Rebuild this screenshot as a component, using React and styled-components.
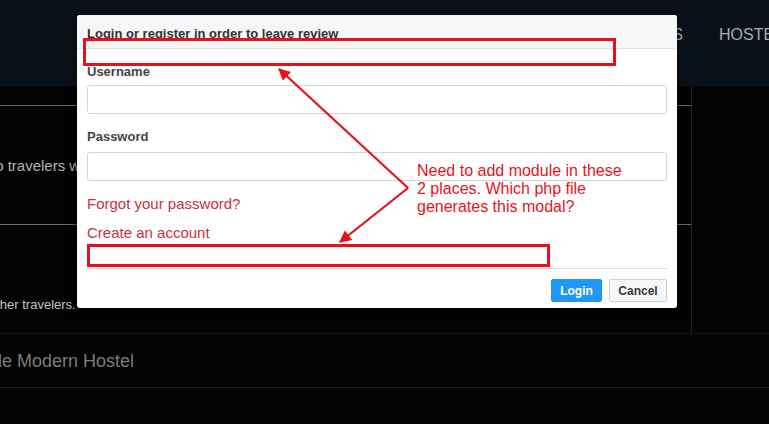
import React from 'react';
import styled, { createGlobalStyle } from 'styled-components';

const Global = createGlobalStyle`
    html, body {
        margin: 0;
        padding: 0;
        background: #020202;
    }
    * { box-sizing: border-box; }
`

const Page = styled.div`
    position: relative;
    width: 769px;
    height: 424px;
    overflow: hidden;
    background: #020202;
    font-family: "Liberation Sans", Arial, sans-serif;
`

const Nav = styled.div`
    height: 86px;
    background: #0b1119;
    display: flex;
    align-items: flex-start;
    padding-top: 26px;
    gap: 36px;
    white-space: nowrap;
`

const NavItem = styled.div`
    flex: none;
    width: ${({$width}) => $width ? `${$width}px` : 'auto'};
    text-align: ${({$width}) => $width ? 'right' : 'left'};
    font-size: 16px;
    line-height: 18px;
    color: #a9adb2;
`

const Upper = styled.div`
    display: flex;
    height: 248px;
    border-bottom: 1px solid #161616;
`

const MainCol = styled.div`
    width: 692px;
    border-right: 1px solid #29231a;
    padding-top: 19px;
    display: flex;
    flex-direction: column;
`

const Block = styled.div`
    height: ${({$h}) => $h}px;
    border-top: 1px solid #6c6c6c;
    display: flex;
    align-items: ${({$align='center'}) => $align};
    padding-bottom: ${({$pb=0}) => $pb}px;
    overflow: hidden;
    white-space: nowrap;
`

const BgText = styled.div`
    margin-left: ${({$shift=0}) => $shift}px;
    font-size: ${({$size}) => $size}px;
    color: ${({$color}) => $color};
    line-height: 1;
`

const TitleRow = styled.div`
    height: 54px;
    display: flex;
    align-items: center;
    border-bottom: 1px solid #282116;
    white-space: nowrap;
    overflow: hidden;
`

const Modal = styled.div`
    position: absolute;
    left: 77px;
    top: 15px;
    width: 600px;
    height: 293px;
    background: #fff;
    border-radius: 3px;
    box-shadow: 0 2px 10px rgba(0,0,0,0.5);
    overflow: hidden;
    display: flex;
    flex-direction: column;
`

const ModalHeader = styled.div`
    height: 34px;
    padding: 11px 10px 0;
    background: #f6f7f8;
    border-bottom: 1px solid #e3e4e6;
    font-size: 13px;
    line-height: 16px;
    font-weight: bold;
    color: #333;
`

const ModalBody = styled.div`
    padding: 0 10px;
    display: flex;
    flex-direction: column;
`

const Group = styled.div`
    margin-top: ${({$mt}) => $mt}px;
    display: flex;
    flex-direction: column;
`

const Label = styled.label`
    font-size: 13px;
    line-height: 16px;
    font-weight: bold;
    color: #444;
    margin-bottom: ${({$mb=5}) => $mb}px;
`

const Input = styled.div`
    height: 29px;
    border: 1px solid #d3d4d6;
    border-radius: 3px;
    background: #fff;
`

const Links = styled.div`
    margin-top: 14px;
    display: flex;
    flex-direction: column;
    gap: 11px;
`

const LinkText = styled.a`
    font-size: 15px;
    line-height: 18px;
    color: #c9303f;
    text-decoration: none;
`

const Footer = styled.div`
    margin-top: 26px;
    border-top: 1px solid #dcdde0;
    padding-top: 10px;
    display: flex;
    justify-content: flex-end;
    gap: 7px;
`

const Button = styled.button`
    height: 23px;
    padding: 0;
    border-radius: 2px;
    font-family: "Liberation Sans", Arial, sans-serif;
    font-size: 12px;
    font-weight: bold;
    border: 1px solid ${({$primary}) => $primary ? '#2196f3' : '#cfd0d3'};
    background: ${({$primary}) => $primary ? '#2196f3' : '#f5f6f7'};
    color: ${({$primary}) => $primary ? '#fff' : '#3a3a3a'};
    width: ${({$w}) => $w}px;
`

const Overlay = styled.svg`
    position: absolute;
    left: 0;
    top: 0;
    pointer-events: none;
`

const Note = styled.div`
    position: absolute;
    left: 417px;
    top: 162px;
    font-size: 16px;
    line-height: 18px;
    color: #e5141c;
`

const RED = '#e8101a';

function Annotation(){
    return <Overlay width="769" height="424" viewBox="0 0 769 424">
        <defs>
            <marker id="head" viewBox="0 0 10 10" refX="9" refY="5"
                markerWidth="6" markerHeight="5.5" orient="auto"
                markerUnits="strokeWidth">
                <path d="M0 0 L10 5 L0 10 Z" fill={RED} />
            </marker>
        </defs>
        <rect x="84.5" y="39.5" width="530" height="25" fill="none" stroke={RED} strokeWidth="3" />
        <rect x="88.5" y="245.5" width="460" height="20" fill="none" stroke={RED} strokeWidth="3" />
        <line x1="408" y1="188" x2="279" y2="69" stroke={RED} strokeWidth="2.2" markerEnd="url(#head)" />
        <line x1="408" y1="188" x2="340" y2="242" stroke={RED} strokeWidth="2.2" markerEnd="url(#head)" />
    </Overlay>
}

export default function App(){
    return <>
        <Global />
        <Page>
            <Nav>
                <NavItem $width={683}>DESTINATIONS</NavItem>
                <NavItem>HOSTELS</NavItem>
            </Nav>
            <Upper>
                <MainCol>
                    <Block $h={120}>
                        <BgText $shift={-9} $size={15} $color="#b3b3b3">to travelers worldwide</BgText>
                    </Block>
                    <Block $h={109} $align="flex-end" $pb={22}>
                        <BgText $shift={-11} $size={13} $color="#c4c4c4">other travelers.</BgText>
                    </Block>
                </MainCol>
            </Upper>
            <TitleRow>
                <BgText $shift={-2} $size={18} $color="#7c7c7c">le Modern Hostel</BgText>
            </TitleRow>

            <Modal>
                <ModalHeader>Login or register in order to leave review</ModalHeader>
                <ModalBody>
                    <Group $mt={15}>
                        <Label>Username</Label>
                        <Input />
                    </Group>
                    <Group $mt={15}>
                        <Label $mb={7}>Password</Label>
                        <Input />
                    </Group>
                    <Links>
                        <LinkText href="#">Forgot your password?</LinkText>
                        <LinkText href="#">Create an account</LinkText>
                    </Links>
                    <Footer>
                        <Button $primary $w={51}>Login</Button>
                        <Button $w={58}>Cancel</Button>
                    </Footer>
                </ModalBody>
            </Modal>

            <Annotation />
            <Note>
                Need to add module in these<br />
                2 places. Which php file<br />
                generates this modal?
            </Note>
        </Page>
    </>
}
